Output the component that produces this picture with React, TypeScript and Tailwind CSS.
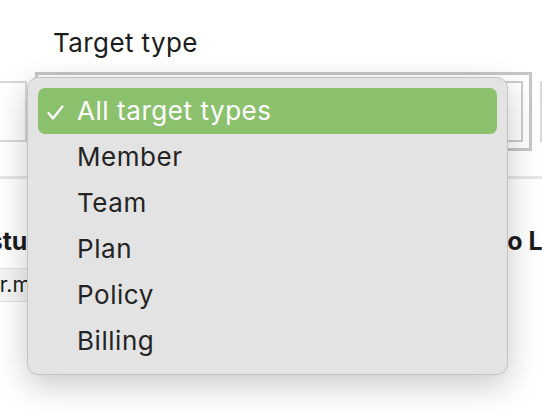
import React from "react";

const font = { fontFamily: "Inter, 'Noto Sans', 'Liberation Sans', sans-serif" };

const options = ["All target types", "Member", "Team", "Plan", "Policy", "Billing"];

function CheckMark() {
  return (
    <svg width="17" height="15" viewBox="0 0 17 15" className="shrink-0">
      <path d="M1.6 8.2 L6 13.4 L15.4 1.6" fill="none" stroke="white" strokeWidth="2.4" strokeLinecap="round" strokeLinejoin="round" />
    </svg>
  );
}

function Menu({ selected }: { selected: number }) {
  return (
    <div className="absolute left-[27px] top-[77px] w-[481px] rounded-[11px] border border-[#c4c4c4] bg-[#e3e3e3] px-[10px] pt-[10px] pb-[10px] shadow-[0_10px_32px_rgba(0,0,0,0.22)]">
      {options.map((opt, i) => {
        const active = i === selected;
        return (
          <div
            key={opt}
            className={
              active
                ? "flex h-[46px] items-center rounded-[7px] bg-[#8bc16c] text-white"
                : "flex h-[46px] items-center text-[#242424]"
            }
          >
            <div className="flex w-[39px] justify-start pl-[9px] pt-[2px]">{active && <CheckMark />}</div>
            <span className="text-[26px] leading-none tracking-[0.55px]">{opt}</span>
          </div>
        );
      })}
    </div>
  );
}

export default function App() {
  return (
    <div className="relative h-[414px] w-[542px] overflow-hidden bg-white text-[#1c1c1c]" style={font}>
      {/* filter area */}
      <div className="pt-[27px]">
        <div className="pl-[53px] text-[26px] leading-[32px] tracking-[0.4px]">Target type</div>
        <div className="mt-[22px] flex h-[61px] gap-[17px]">
          <div className="w-[27px] shrink-0 border-y-2 border-r-2 border-[#d8d8d8] bg-white" />
          <div className="w-[479px] shrink-0 border-2 border-[#cdcdcd] bg-white outline-3 outline-[#c6c6c6] outline-offset-6" />
          <div className="w-[40px] shrink-0 border-y-2 border-l-2 border-[#d8d8d8] bg-white" />
        </div>
      </div>
      <div className="mt-[34px] h-[3px] bg-[#e6e6e6]" />

      {/* table */}
      <div className="mt-[47px] flex text-[25px] font-bold leading-[30px]">
        <div className="-ml-[45px] flex-1 whitespace-nowrap">Gesture</div>
        <div className="w-[78px] shrink-0 whitespace-nowrap">Auto Lock</div>
      </div>
      <div className="mt-[12px] flex h-[34px]">
        <div className="-ml-[40px] flex w-[200px] items-center whitespace-nowrap border-y border-[#e2e2e2] bg-[#f4f4f4] pl-[4px] text-[21px]">
          user.morgan@example.com
        </div>
      </div>

      <Menu selected={0} />
    </div>
  );
}
